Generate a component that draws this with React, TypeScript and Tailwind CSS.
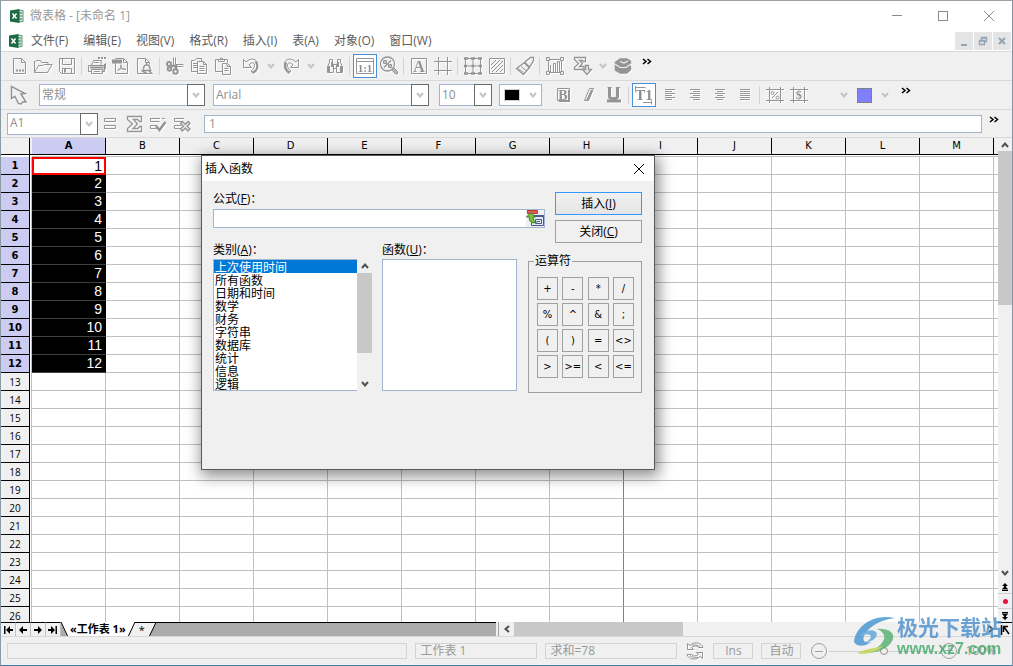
import React, { FC, ReactNode, useState } from "react";

const columns = ["A", "B", "C", "D", "E", "F", "G", "H", "I", "J", "K", "L", "M"];
const rows = Array.from({ length: 26 }, (_, i) => i + 1);
const menus = ["文件(F)", "编辑(E)", "视图(V)", "格式(R)", "插入(I)", "表(A)", "对象(O)", "窗口(W)"];
const categories = ["上次使用时间", "所有函数", "日期和时间", "数学", "财务", "字符串", "数据库", "统计", "信息", "逻辑"];
const operators = ["+", "-", "*", "/", "%", "^", "&", ";", "(", ")", "=", "<>", ">", ">=", "<", "<="];

const Glyph: FC<{ children: ReactNode }> = ({ children }) => (
  <svg
    className="h-5 w-5 shrink-0 drop-shadow-[1px_1px_0_#ffffff]"
    viewBox="0 0 20 20"
    fill="none"
    stroke="#949494"
    aria-hidden="true"
  >
    {children}
  </svg>
);

const icons: Record<string, ReactNode> = {
  new: (
    <>
      <path d="M4.5 2.5h8l4 4v11h-12zM12.5 2.5v4h4" />
      <path d="M7 14.5h2M10 14.5h2M13 14.5h2" strokeWidth="2" />
    </>
  ),
  open: <path d="M1.5 16.5V5.5h1l1-1h4l1 2h6.5v3M1.5 16.5l4-7h4l2-1h7.5l-4.5 8z" />,
  save: (
    <>
      <path d="M2.5 2.5h15v15h-13l-2-2zM5.5 2.5v6h9v-6M5.5 17.5v-5h9v5" />
      <path d="M8 13v3.5" strokeWidth="2" />
    </>
  ),
  print: (
    <>
      <path d="M1.5 9.5h16v6h-3M4.5 15.5h-3v-6M4.5 9.5l2-5h8l-1 5M7 6.5h5M4.5 13.5h11v4h-11zM7 15.5h6" />
      <path d="M3 11.5h13M11 2h2M14 2h2M17 2h2" strokeWidth="2" />
      <path d="M16.5 9.5l2-2v5l-2 2" fill="#949494" />
    </>
  ),
  pdf: (
    <>
      <path d="M4.5 7v10.5h12v-11l-4-4h-8M12.5 2.5v4h4" />
      <path d="M1 5.500h10" strokeWidth="4" />
      <path d="M6.5 14.5c3-1 4-4 3.5-6M10 9c0 3 2 4.5 5 4.5M7 14c2-1.5 5-1.5 8-.5" />
    </>
  ),
  preview: (
    <>
      <path d="M16 17.5H2.5v-15h8l4 4v2M10.5 2.5v4h4" />
      <path d="M6.5 14.5h10M8.5 13.5c0-6 6.5-6 6.5 0M11.7 9V7M7 14.5c1 2 3 2 4.5 2M14 15l3.5 3" strokeWidth="1.5" />
    </>
  ),
  cut: (
    <>
      <path d="M8.5 1.5v8M10.5 1.5v8M10 8.5h8.5M10 10.5h8.5" />
      <circle cx="4" cy="8" r="2" strokeWidth="2" />
      <circle cx="10.5" cy="15.5" r="2.2" strokeWidth="2" />
      <circle cx="4.5" cy="13" r="1.800" strokeWidth="2" />
      <path d="M6 10h5v3" strokeWidth="2.5" />
    </>
  ),
  copy: (
    <>
      <path d="M8 15.5H2.5v-11h3l2-2h5v3M8.5 5.5h6l3 3v9h-9zM14.5 5.5v3h3" />
      <path d="M4 7.5h4M4 9.5h4M4 11.5h4M10.5 10.5h5M10.5 12.5h5M10.5 14.5h5" />
    </>
  ),
  paste: (
    <>
      <path d="M9 15.5H2.5v-12h12v3M9.5 7.5h5l3 3v8h-8zM14 7.5v3h3.5M11.5 12.5h4M11.5 14.5h4" />
      <path d="M5.5 5.5h6v-2h-1.5l-1-1.5h-1l-1 1.5h-1.5z" />
    </>
  ),
  undo: (
    <>
      <path d="M2.5 3.500v8h8l-2.500-2.500c3-3.500 5-2.500 5.500 0 .3 2-1 4-3 5.500v1.500c4-1 6.500-4 6-8-.5-5-6-7-11.500-2z" />
      <path d="M14.5 5.5c4 5 1 10-3 11.500" strokeWidth="2" />
    </>
  ),
  redo: (
    <>
      <path d="M17.5 3.500v8h-8l2.500-2.500c-3-3.500-5-2.500-5.500 0-.3 2 1 4 3 5.500v1.500c-4-1-6.500-4-6-8 .5-5 6-7 11.500-2z" />
      <path d="M5 6.5c-2.500 5 1 9 3.500 10.500" strokeWidth="2.500" />
    </>
  ),
  find: (
    <>
      <path d="M2.5 16.5v-6l2-4v-3h3v3l1 4v6zM11.5 16.5v-6l1-4v-3h3v3l2 4v6zM8.5 8.5h3v4h-3z" />
      <path d="M4 10v6M7 6v5M13 6v5M16 10v6" strokeWidth="2" />
    </>
  ),
  actual: (
    <>
      <path d="M1.5 2.5h17v15h-17zM1.5 5.5h17" />
      <text x="10" y="15.5" textAnchor="middle" className="font-['Liberation_Serif',serif] text-[11px] font-bold" fill="#8c8c8c" stroke="none">1:1</text>
    </>
  ),
  zoom: (
    <>
      <circle cx="8.5" cy="8" r="7" strokeWidth="1.300" />
      <path d="M5 11.500l7-7" strokeWidth="1.500" />
      <path d="M13 12.5l1.500-1 4 4v2.500h-2l-3.500-4z" fill="#b4b4b4" />
      <circle cx="6" cy="6" r="1.500" strokeWidth="1.400" />
      <circle cx="11" cy="10" r="1.500" strokeWidth="1.400" />
    </>
  ),
  textBox: (
    <>
      <path d="M2.5 2.5h15v15h-15z" />
      <text x="10" y="16" textAnchor="middle" className="font-['Liberation_Serif',serif] text-[16px] font-bold" fill="#949494" stroke="none">A</text>
    </>
  ),
  frame: <path d="M1 5.5h18M1 14.5h18M5.5 1v18M14.5 1v18" />,
  border: (
    <>
      <path d="M3 2.500h14M3 10h14M3 17.500h14M2.500 3v14M10 3v14M17.500 3v14" />
      <path d="M1 2.500h4M8 2.500h4M15 2.500h4M1 17.500h4M8 17.500h4M15 17.500h4M1 10h3M8.500 10h3M16 10h3" strokeWidth="2.500" />
    </>
  ),
  hatch: <path d="M2.5 2.5h15v15h-15zM4 9l5-5M4 13l9-9M5 16l11-11M9 16l7-7M13 16l3-3" />,
  brush: (
    <>
      <path d="M18.500 1.500h-3l-6 5-8 6 7 6 6-7 4-7z" strokeWidth="1.300" />
      <path d="M9.500 6.500l5 5" strokeWidth="2" />
      <path d="M3 12.500l5.500 4M6 10.500l5 4" />
    </>
  ),
  chart: (
    <>
      <path d="M3.5 3.5h13v13h-13zM5.500 9v7M8.5 12.500v4h-3v-4M8.5 7.5h2v9h-2zM12.500 5.500h2v11h-2z" />
      <path d="M1.5 1.5h3v3h-3zM15.5 1.5h3v3h-3zM1.5 15.5h3v3h-3zM15.5 15.5h3v3h-3z" fill="#efefef" />
    </>
  ),
  sumDown: (
    <>
      <path d="M1.5 1.5h11v4h-2l-1-1H6.5l3 3-3 3h4.5v3h-9.5v-2l4-4-4-4z" strokeWidth="1.300" />
      <path d="M12.5 9.5h3v4h3l-4.500 5-4.500-5h3z" fill="#e8e8e8" strokeWidth="1.300" />
    </>
  ),
  package: (
    <>
      <path d="M2 6l5-3.500h7L18 5v2.500l-1 1.500 1 1v4l-4 3.500H7L2 14.500z" fill="#949494" strokeWidth=".5" />
      <path d="M2 8l5 3.500h6l5-3.500M7 5.500l4 1.500 4-2" stroke="#efefef" strokeWidth="1.200" />
    </>
  ),
  pointer: <path d="M2.5 1.5v12l3.500-2 3.500 7 3 .5 1-2h3.500l-5-8 4-.5z" strokeWidth="1.500" />,
  bold: (
    <>
      <path d="M3.5 3.5h12v12h-12z" />
      <path d="M15 5v12M5 16h11" strokeWidth="2" />
      <text x="9" y="15" textAnchor="middle" className="font-['Liberation_Serif',serif] text-[14px] font-bold" fill="#949494" stroke="none">B</text>
    </>
  ),
  italic: (
    <>
      <path d="M10.5 3.5h4l-5 12h-4z" />
      <path d="M13 5l-5 11" strokeWidth="2" />
    </>
  ),
  underline: (
    <>
      <path d="M5.500 2.5v9c0 3 8 3 8 0v-9" strokeWidth="3" />
      <path d="M3.500 2.500h4M12 2.500h4" />
      <path d="M3 16h14" strokeWidth="3" />
    </>
  ),
  textFlow: (
    <>
      <path d="M1.5 2.5h10M9 17.5h9M1.5 1v4M17.5 15.5v4" />
      <text x="10" y="15" textAnchor="middle" className="font-['Liberation_Serif',serif] text-[15px] font-bold" fill="#8c8c8c" stroke="none">T1</text>
    </>
  ),
  left: <path d="M5 4.5h10M5 6.5h7M5 8.5h10M5 10.5h7M5 12.5h10M5 14.5h7" />,
  right: <path d="M5 4.5h10M8 6.5h7M5 8.5h10M8 10.5h7M5 12.5h10M8 14.5h7" />,
  center: <path d="M5 4.5h10M7 6.5h6M5 8.5h10M7 10.5h6M5 12.5h10M7 14.5h6" />,
  justify: <path d="M5 4.5h10M5 6.5h10M5 8.5h10M5 10.5h10M5 12.5h10M5 14.5h10" />,
  percent: (
    <>
      <path d="M1 4.5h18M1 15.5h18M4.5 2v16M15.5 2v16M7 13l6-6" />
      <circle cx="7.500" cy="8" r="1.500" />
      <circle cx="12.500" cy="12.500" r="1.500" />
    </>
  ),
  money: (
    <>
      <path d="M1 4.5h18M1 15.5h18M4.5 2v16M15.5 2v16" />
      <text x="10" y="14" textAnchor="middle" className="font-['Liberation_Serif',serif] text-[12px] font-bold" fill="#949494" stroke="none">$</text>
    </>
  ),
  equals: <path d="M4.5 4.5h11v3h-11zM4.5 11.5h11v3h-11z" />,
  sum: <path d="M3.5 2.5h14v5h-2l-2-2H9.5l4 4.5-4.500 4.500h5l1.500-2h2v5h-14v-3l5-4.500-5-4.500z" strokeWidth="1.300" />,
  accept: (
    <>
      <path d="M12 4.500H2.5v3h9M9 11.5H2.500v3h6M14 4.500h3" />
      <path d="M8 12l3.500 4 6-8" strokeWidth="2.500" />
    </>
  ),
  cancel: (
    <>
      <path d="M12 4.500H2.5v3h8M9 11.5H2.500v3h6" />
      <path d="M9 8l8.500 8.500M17.500 8l-8.500 8.500" strokeWidth="4" />
      <path d="M10 9l6.500 6.500M16.500 9l-6.500 6.500" stroke="#e8e8e8" strokeWidth="1.300" />
    </>
  ),
  refresh: (
    <>
      <path d="M2.5 2.5v6h6l-2-2c3-2 5-2 7 0h4.500c-1-4-8-7-13-2zM17.5 17.5v-6h-6l2 2c-3 2-5 2-7 0H2c1 4 8 7 13 2z" />
      <path d="M7 4.500c3-1 6-.5 8 1.500M5 14.500c3 2.500 6 2.500 8 1.500" />
    </>
  ),
};

const ToolButton: FC<{ icon: string; label: string; active?: boolean }> = ({ icon, label, active }) => (
  <button
    type="button"
    aria-label={label}
    className={`flex h-6 w-6 shrink-0 items-center justify-center ${active ? "border border-[#4a90d9] bg-white" : ""}`}
  >
    <Glyph>{icons[icon]}</Glyph>
  </button>
);

const Separator: FC<{ tight?: boolean }> = ({ tight }) => (
  <span className={`h-[18px] shrink-0 border-l border-[#d4d4d4] ${tight ? "ml-px w-[3px]" : "ml-0.5 w-1"}`} />
);

const Chevron: FC<{ className?: string; up?: boolean }> = ({ className = "text-[#c4c4c4]", up }) => (
  <svg className={`h-2 w-2 shrink-0 ${className}`} viewBox="0 0 8 8" fill="none" stroke="currentColor" strokeWidth="2" aria-hidden="true">
    <path d={up ? "M1 6l3-3.500L7 6" : "M1 2l3 3.500L7 2"} />
  </svg>
);

const DropButton: FC<{ label: string }> = ({ label }) => (
  <button type="button" aria-label={label} className="flex h-6 w-4 shrink-0 items-center justify-center">
    <Chevron />
  </button>
);

const MoreButton: FC<{ className?: string }> = ({ className = "" }) => (
  <button type="button" aria-label="更多" className={`flex h-6 w-4 shrink-0 items-start justify-center pt-1 ${className}`}>
    <svg className="h-2 w-2.5" viewBox="0 0 10 8" fill="none" stroke="#000000" strokeWidth="1.500" aria-hidden="true">
      <path d="M1 1l3 2.500L1 6M5.500 1l3 2.500-3 2.500" />
    </svg>
  </button>
);

const Combo: FC<{ label: string; value: string; className: string }> = ({ label, value, className }) => (
  <div className={`relative h-[22px] shrink-0 border border-[#a3b4d0] bg-white ${className}`}>
    <select aria-label={label} className="block h-full w-full appearance-none bg-transparent pb-px pl-0.5 text-xs leading-[18px] text-[#8f8f8f] outline-none">
      <option>{value}</option>
    </select>
    <span className="pointer-events-none absolute -top-px -right-px flex h-[22px] w-[18px] items-center justify-center border border-[#6b6b6b] bg-white">
      <Chevron />
    </span>
  </div>
);

const AppLogo = () => (
  <svg className="h-4 w-4 shrink-0" viewBox="0 0 16 16" aria-hidden="true">
    <path d="M9 2l5 .5v11l-5 .5z" fill="#d8e8de" stroke="#5d9675" />
    <path d="M10 5h3M10 8h3M10 11h3" stroke="#2d7a50" />
    <path d="M1 2.500L10.500 1v14L1 13.500z" fill="#1e6b43" />
    <path d="M3.500 5.500l4 5M7.500 5.500l-4 5" stroke="#ffffff" strokeWidth="1.500" />
  </svg>
);

const TitleBar = () => (
  <header className="flex h-[29px] shrink-0 items-center bg-white pl-2">
    <AppLogo />
    <h1 className="ml-[5px] flex-1 text-xs whitespace-pre text-[#999999]">微表格 - [未命名 1]</h1>
    <button type="button" aria-label="最小化" className="flex h-full w-[46px] items-center justify-center">
      <span className="w-2.5 border-t border-[#8a8a8a]" />
    </button>
    <button type="button" aria-label="最大化" className="flex h-full w-[46px] items-center justify-center">
      <span className="h-2.5 w-2.5 border border-[#8a8a8a]" />
    </button>
    <button type="button" aria-label="关闭" className="flex h-full w-[46px] items-center justify-center">
      <svg className="h-3 w-3" viewBox="0 0 12 12" stroke="#8a8a8a" aria-hidden="true">
        <path d="M1 1l10 10M11 1L1 11" />
      </svg>
    </button>
  </header>
);

const MenuBar = () => (
  <nav className="flex h-[21px] shrink-0 items-center bg-white pr-px pl-[7px]">
    <AppLogo />
    <div className="ml-[7px] flex flex-1 gap-[15px] text-xs text-[#5c5c5c]">
      {menus.map((menu) => (
        <button key={menu} type="button">
          {menu}
        </button>
      ))}
    </div>
    <div className="flex gap-px pt-px text-[#94a3b3]">
      <button type="button" aria-label="最小化文档" className="flex h-[18px] w-[18px] items-end justify-center bg-[#e5e5e5] pb-1">
        <span className="w-1.5 border-t-2 border-current" />
      </button>
      <button type="button" aria-label="还原文档" className="flex h-[18px] w-[18px] items-center justify-center bg-[#e5e5e5]">
        <svg className="h-2.5 w-2.5" viewBox="0 0 10 10" fill="none" stroke="currentColor" aria-hidden="true">
          <path d="M3.500 4V1.500h5v4H7M1.500 4.500h5v4h-5zM3 2h6M1 5h6" strokeWidth="1.300" />
        </svg>
      </button>
      <button type="button" aria-label="关闭文档" className="flex h-[18px] w-[18px] items-center justify-center bg-[#e5e5e5]">
        <svg className="h-2 w-2" viewBox="0 0 8 8" stroke="currentColor" strokeWidth="2" aria-hidden="true">
          <path d="M1 1l6 6M7 1L1 7" />
        </svg>
      </button>
    </div>
  </nav>
);

const StandardToolbar = () => (
  <div className="flex h-[29px] shrink-0 items-center border-t border-[#d9d9d9] pl-1.5">
    <ToolButton icon="new" label="新建" />
    <ToolButton icon="open" label="打开" />
    <ToolButton icon="save" label="保存" />
    <Separator />
    <ToolButton icon="print" label="打印" />
    <ToolButton icon="pdf" label="导出 PDF" />
    <ToolButton icon="preview" label="预览" />
    <Separator />
    <ToolButton icon="cut" label="剪切" />
    <ToolButton icon="copy" label="复制" />
    <ToolButton icon="paste" label="粘贴" />
    <div className="ml-1 flex">
      <ToolButton icon="undo" label="撤消" />
      <DropButton label="撤消列表" />
      <ToolButton icon="redo" label="重做" />
      <DropButton label="重做列表" />
    </div>
    <div className="ml-1 flex">
      <ToolButton icon="find" label="查找" />
    </div>
    <Separator />
    <ToolButton icon="actual" label="实际大小" active />
    <ToolButton icon="zoom" label="缩放" />
    <Separator />
    <ToolButton icon="textBox" label="文本框" />
    <ToolButton icon="frame" label="框架" />
    <Separator />
    <ToolButton icon="border" label="边框" />
    <ToolButton icon="hatch" label="底纹" />
    <Separator tight />
    <ToolButton icon="brush" label="格式刷" />
    <Separator />
    <ToolButton icon="chart" label="图表" />
    <div className="ml-1 flex">
      <ToolButton icon="sumDown" label="求和" />
      <DropButton label="求和列表" />
      <ToolButton icon="package" label="数据" />
    </div>
    <MoreButton className="ml-1" />
  </div>
);

const FormatToolbar = () => (
  <div className="flex h-[29px] shrink-0 items-center border-t border-[#d9d9d9] pl-1.5">
    <ToolButton icon="pointer" label="选择" />
    <div className="ml-2 flex gap-2">
      <Combo label="样式" value="常规" className="w-[166px]" />
      <Combo label="字体" value="Arial" className="w-[216px]" />
    </div>
    <div className="ml-2.5 flex gap-[7px]">
      <Combo label="字号" value="10" className="w-[53px]" />
      <button type="button" aria-label="字体颜色" className="flex h-[22px] w-[43px] items-center justify-between border border-[#a3b4d0] bg-white px-1">
        <span className="h-3 w-4 border border-[#d0d0d0] bg-black" />
        <Chevron />
      </button>
    </div>
    <div className="ml-2.5 flex gap-px">
      <ToolButton icon="bold" label="粗体" />
      <ToolButton icon="italic" label="斜体" />
      <ToolButton icon="underline" label="下划线" />
    </div>
    <Separator />
    <ToolButton icon="textFlow" label="文字方向" active />
    <div className="ml-0.5 flex gap-px">
      <ToolButton icon="left" label="左对齐" />
      <ToolButton icon="right" label="右对齐" />
      <ToolButton icon="center" label="居中" />
      <ToolButton icon="justify" label="两端对齐" />
    </div>
    <Separator />
    <ToolButton icon="percent" label="百分比" />
    <ToolButton icon="money" label="货币" />
    <div className="ml-[25px] flex items-center">
      <DropButton label="边框颜色" />
      <button type="button" aria-label="填充颜色" className="mx-[5px] h-[15px] w-[15px] border border-[#808080] bg-[#8080ff]" />
      <DropButton label="填充颜色列表" />
    </div>
    <MoreButton className="ml-[5px]" />
  </div>
);

const FormulaBar = () => (
  <div className="flex h-[29px] shrink-0 items-center border-t border-b border-[#d9d9d9] pr-2.5 pl-1.5">
    <Combo label="单元格" value="A1" className="w-[91px]" />
    <ToolButton icon="equals" label="等于" />
    <ToolButton icon="sum" label="求和" />
    <ToolButton icon="accept" label="确认" />
    <ToolButton icon="cancel" label="取消" />
    <input
      aria-label="编辑栏"
      defaultValue="1"
      className="ml-2.5 h-[18px] min-w-0 flex-1 border border-[#a3b4d0] bg-white px-1 text-xs text-[#8f8f8f] outline-none"
    />
    <MoreButton className="ml-1" />
  </div>
);

const Sheet = () => (
  <div className="min-h-0 min-w-0 flex-1 overflow-hidden bg-white">
    <table className="w-full table-fixed border-separate border-spacing-0">
      <colgroup>
        <col className="w-[29px]" />
        <col className="w-0.5" />
        {columns.map((column) => (
          <col key={column} className="w-[74px]" />
        ))}
        <col />
      </colgroup>
      <thead>
        <tr className="h-[17px] bg-[#f0f0f0] font-['DejaVu_Sans',sans-serif] text-[10px] leading-4">
          <th className="border-r border-b border-black p-0" />
          <th className="border-b border-black p-0" />
          {columns.map((column) => (
            <th
              key={column}
              scope="col"
              className={`border-r border-b border-black p-0 ${column === "A" ? "bg-[#ccccf2] font-bold" : "font-normal"}`}
            >
              {column}
            </th>
          ))}
          <th className="border-b border-black p-0" />
        </tr>
      </thead>
      <tbody>
        <tr className="h-0.5">
          <td className="border-r border-black p-0" />
          <td className="p-0" />
          <td colSpan={14} className="border-b border-[#c0c0c0] p-0" />
        </tr>
        {rows.map((row) => {
          const selected = row <= 12;
          return (
            <tr key={row} className="h-[18px]">
              <th
                scope="row"
                className={`border-r border-b border-black p-0 pt-px text-[10px] leading-4 ${
                  selected ? "bg-[#ccccf2] font-['DejaVu_Sans',sans-serif] font-bold" : "bg-[#f0f0f0] font-normal"
                }`}
              >
                {row}
              </th>
              <td className="border-r border-[#c0c0c0] p-0" />
              {columns.map((column) => {
                if (column === "A" && row === 1) {
                  return (
                    <td key={column} className="p-0 pr-1 pb-px text-right font-['Liberation_Sans',sans-serif] text-sm leading-4 ring-2 ring-[#ff0000] ring-inset">
                      {row}
                    </td>
                  );
                }
                if (column === "A" && selected) {
                  return (
                    <td key={column} className="border-b border-[#404040] bg-black p-0 pr-1 pb-px text-right font-['Liberation_Sans',sans-serif] text-sm leading-4 text-white">
                      {row}
                    </td>
                  );
                }
                return (
                  <td
                    key={column}
                    className={`border-r border-b border-b-[#c0c0c0] p-0 ${column === "H" ? "border-r-[#808080]" : "border-r-[#c0c0c0]"}`}
                  />
                );
              })}
              <td className="border-b border-[#c0c0c0] p-0" />
            </tr>
          );
        })}
      </tbody>
    </table>
  </div>
);

const VerticalScroll = () => (
  <aside className="flex w-3.5 shrink-0 flex-col bg-[#f0f0f0]">
    <button type="button" aria-label="向上滚动" className="flex h-[13px] items-center justify-center">
      <Chevron up className="text-[#505050]" />
    </button>
    <div className="min-h-0 flex-1">
      <div className="h-[37%] bg-[#c8c8c8]" />
    </div>
    <button type="button" aria-label="向下滚动" className="flex h-3.5 items-center justify-center">
      <Chevron className="text-[#505050]" />
    </button>
    <button type="button" aria-label="上一页" className="flex h-3.5 items-center justify-center border-b border-[#d0d0d0]">
      <svg className="h-2 w-2" viewBox="0 0 8 8" aria-hidden="true">
        <path d="M4 0l3 3H5v1l2 2H1l2-2V3H1zM1 6.500h6V8H1z" />
      </svg>
    </button>
    <button type="button" aria-label="选择对象" className="flex h-3.5 items-center justify-center">
      <span className="h-[5px] w-[5px] rounded-full bg-[#e8103c]" />
    </button>
    <button type="button" aria-label="下一页" className="flex h-3.5 items-center justify-center border-t border-[#d0d0d0]">
      <svg className="h-2 w-2" viewBox="0 0 8 8" aria-hidden="true">
        <path d="M4 8l3-3H5V4l2-2H1l2 2v1H1zM1 0h6v1.500H1z" />
      </svg>
    </button>
  </aside>
);

const navArrows = [
  { label: "第一张工作表", d: "M1 1h1.500v8H1zM3 5l4-4v3h3v2H7v3z" },
  { label: "上一张工作表", d: "M1 5l4-4v3h4v2H5v3z" },
  { label: "下一张工作表", d: "M9 5L5 1v3H1v2h4v3z" },
  { label: "最后一张工作表", d: "M9 1H7.500v8H9zM7 5L3 1v3H0v2h3v3z" },
];

const SheetTabs = () => (
  <div className="flex h-3.5 shrink-0 bg-[#f0f0f0]">
    <div className="flex w-[49%] shrink-0 bg-[#ababab]">
      {navArrows.map((arrow) => (
        <button
          key={arrow.label}
          type="button"
          aria-label={arrow.label}
          className="flex w-[15px] shrink-0 items-center justify-center border-t border-r border-t-black border-r-[#c0c0c0] bg-[#f0f0f0]"
        >
          <svg className="h-2.5 w-2.5" viewBox="0 0 10 10" aria-hidden="true">
            <path d={arrow.d} />
          </svg>
        </button>
      ))}
      <svg className="h-3.5 w-[7px] shrink-0" viewBox="0 0 7 14" aria-hidden="true">
        <path d="M0 0h7v14h-1z" fill="#ffffff" />
        <path d="M0 0l6.500 14" stroke="#000000" />
      </svg>
      <button type="button" className="shrink-0 bg-white px-0.5 text-[11px] leading-3 font-bold whitespace-pre">
        «工作表 1»
      </button>
      <svg className="h-3.5 w-[7px] shrink-0" viewBox="0 0 7 14" aria-hidden="true">
        <path d="M7 0h-7v14h1z" fill="#ffffff" />
        <path d="M7 0v14h-6z" fill="#f0f0f0" />
        <path d="M7 0L.5 14" stroke="#000000" />
      </svg>
      <button type="button" className="w-3.5 shrink-0 border-t border-black bg-[#f0f0f0] text-[11px] leading-3">
        *
      </button>
      <svg className="h-3.5 w-[7px] shrink-0" viewBox="0 0 7 14" aria-hidden="true">
        <path d="M7 0H0v14h1z" fill="#f0f0f0" />
        <path d="M0 .5h7L.5 14" stroke="#000000" fill="none" />
      </svg>
      <span className="flex-1 border-t border-black" />
    </div>
    <span className="mr-px w-[3px] border-r border-[#a0a0a0]" />
    <div className="flex min-w-0 flex-1">
      <button type="button" aria-label="向左滚动" className="flex w-3.5 shrink-0 items-center justify-center">
        <Chevron className="rotate-90 text-[#505050]" />
      </button>
      <div className="flex-1">
        <div className="h-full w-[36%] bg-[#c8c8c8]" />
      </div>
      <button type="button" aria-label="向右滚动" className="flex w-3.5 shrink-0 items-center justify-center">
        <Chevron className="-rotate-90 text-[#505050]" />
      </button>
      <button type="button" aria-label="转到左上角" className="flex w-3.5 shrink-0 items-center justify-center border-t border-black">
        <svg className="h-2.5 w-2.5" viewBox="0 0 10 10" fill="none" stroke="#000000" aria-hidden="true">
          <path d="M1.500 0v10M3 1.500h5M3.500 2v5M4 2l5 7" strokeWidth="1.500" />
        </svg>
      </button>
    </div>
  </div>
);

const StatusBar = () => (
  <footer className="flex h-[29px] shrink-0 items-center gap-2 border-t border-[#d9d9d9] pr-4 pl-1.5 text-xs text-[#999999]">
    <span className="h-4 flex-1 border border-[#d4d4d4]" />
    <span className="h-4 w-[122px] border border-[#d4d4d4] px-1 leading-[14px]">工作表 1</span>
    <span className="h-4 w-[132px] border border-[#d4d4d4] px-1 leading-[14px]">求和=78</span>
    <button type="button" aria-label="重新计算" className="flex w-5 justify-center">
      <Glyph>{icons.refresh}</Glyph>
    </button>
    <span className="h-4 w-10 border border-[#d4d4d4] text-center leading-[14px]">Ins</span>
    <span className="h-4 w-10 border border-[#d4d4d4] text-center leading-[14px]">自动</span>
    <div className="ml-0.5 flex items-center gap-0.5">
      <button type="button" aria-label="缩小" className="flex h-4 w-4 items-center justify-center rounded-full border border-[#a0a0a0]">
        <span className="w-2 border-t border-[#a0a0a0]" />
      </button>
      <input
        type="range"
        aria-label="缩放比例"
        className="h-4 w-[110px] appearance-none bg-transparent [&::-webkit-slider-runnable-track]:h-px [&::-webkit-slider-runnable-track]:bg-[#d0d0d0] [&::-webkit-slider-thumb]:-mt-1 [&::-webkit-slider-thumb]:h-2 [&::-webkit-slider-thumb]:w-2 [&::-webkit-slider-thumb]:appearance-none [&::-webkit-slider-thumb]:rounded-full [&::-webkit-slider-thumb]:border [&::-webkit-slider-thumb]:border-[#909090] [&::-webkit-slider-thumb]:bg-[#f0f0f0]"
      />
      <button type="button" aria-label="放大" className="flex h-4 w-4 items-center justify-center rounded-full border border-[#a0a0a0]">
        <svg className="h-2 w-2" viewBox="0 0 8 8" stroke="#a0a0a0" aria-hidden="true">
          <path d="M0 3.500h8M4 0v8" />
        </svg>
      </button>
    </div>
    <span>100%</span>
  </footer>
);

const InsertFunctionDialog = () => {
  const [formula, setFormula] = useState("");
  const [category, setCategory] = useState(categories[0]);

  return (
    <section
      role="dialog"
      aria-label="插入函数"
      className="absolute top-[154px] left-[200px] h-[315px] w-[454px] border border-[#5a5a5a] bg-[#f0f0f0] text-xs text-black shadow-[2px_4px_14px_2px_rgba(0,0,0,0.45)]"
    >
      <div className="flex h-[25px] items-center justify-between bg-white pr-2.5 pl-[3px]">
        <h2>插入函数</h2>
        <button type="button" aria-label="关闭对话框">
          <svg className="h-2.5 w-2.5" viewBox="0 0 10 10" stroke="#000000" aria-hidden="true">
            <path d="M0 0l10 10M10 0L0 10" />
          </svg>
        </button>
      </div>
      <div className="pt-[11px] pr-3 pl-[11px]">
        <div className="flex gap-2.5">
          <div className="flex-1">
            <label htmlFor="formula" className="block h-[17px] leading-[13px]">
              公式(<u>F</u>)：
            </label>
            <div className="flex h-[19px] border border-[#a3b4d0] bg-white">
              <input
                id="formula"
                value={formula}
                onChange={(e) => setFormula(e.target.value)}
                className="min-w-0 flex-1 px-1 outline-none"
              />
              <button type="button" aria-label="折叠对话框" className="bg-[#f0f0f0]">
                <svg className="h-[17px] w-[18px]" viewBox="0 0 18 17" fill="none" aria-hidden="true">
                  <path d="M1.500 .5h10v3h-10z" fill="#e85a5a" stroke="#b83a3a" />
                  <path d="M5.500 5.500h12v10h-12z" fill="#e4eaf6" stroke="#4a5a8c" />
                  <path d="M5.500 6h12" stroke="#4a5a8c" strokeWidth="2" />
                  <path d="M9.500 9.500h6v4h-6zM11 11.500h3" stroke="#4a5a8c" />
                  <path d="M.5 7L5 2.500 9.500 7H7c0 3 1 4.500 3.500 5-4 2-8 0-7-5z" fill="#7cc142" stroke="#3c7a1c" />
                </svg>
              </button>
            </div>
          </div>
          <div className="flex w-[87px] flex-col gap-[5px]">
            <button
              type="button"
              className="h-[23px] border border-[#3399ff] bg-gradient-to-b from-[#f0f0f0] to-[#e5e5e5]"
              onClick={() => setFormula(`${formula}()`)}
            >
              插入(<u>I</u>)
            </button>
            <button type="button" className="h-[23px] border border-[#a0a0a0]">
              关闭(<u>C</u>)
            </button>
          </div>
        </div>

        <div className="flex gap-2.5">
          <div className="w-[159px]">
            <label htmlFor="category" className="block h-4 leading-[14px]">
              类别(<u>A</u>)：
            </label>
            <div className="flex h-[132px]">
              <select
                id="category"
                size={10}
                value={category}
                onChange={(e) => setCategory(e.target.value)}
                className="h-full min-w-0 flex-1 appearance-none overflow-hidden border border-r-0 border-[#a3b4d0] bg-white leading-[10px] outline-none"
              >
                {categories.map((item) => (
                  <option
                    key={item}
                    className="flex h-[13px] min-h-0 items-center px-px py-0 leading-[10px] checked:bg-[#0078d7] checked:bg-[linear-gradient(#0078d7,#0078d7)] checked:text-white"
                  >
                    {item}
                  </option>
                ))}
              </select>
              <div className="flex w-[15px] flex-col bg-[#f0f0f0]">
                <button type="button" aria-label="列表向上" className="flex h-3.5 items-center justify-center">
                  <Chevron up className="text-[#505050]" />
                </button>
                <div className="h-20 bg-[#c8c8c8]" />
                <button type="button" aria-label="列表向下" className="mt-auto flex h-3.5 items-center justify-center">
                  <Chevron className="text-[#505050]" />
                </button>
              </div>
            </div>
          </div>
          <div className="w-[135px]">
            <label htmlFor="function" className="block h-4 leading-[14px]">
              函数(<u>U</u>)：
            </label>
            <select id="function" size={10} className="block h-[132px] w-full appearance-none border border-[#a3b4d0] bg-white outline-none" />
          </div>
          <fieldset className="mt-2.5 ml-px flex-1 border border-[#a0a0a0] pr-[7px] pb-3.5 pl-2">
            <legend className="ml-[-3px] px-px leading-4">运算符</legend>
            <div className="grid grid-cols-[21px_21px_21px_21px] justify-between gap-y-[3px] pt-2 font-['DejaVu_Sans',sans-serif] text-[10px]">
              {operators.map((operator) => (
                <button
                  key={operator}
                  type="button"
                  className="h-[23px] border border-[#a0a0a0]"
                  onClick={() => setFormula(formula + operator)}
                >
                  {operator}
                </button>
              ))}
            </div>
          </fieldset>
        </div>
      </div>
    </section>
  );
};

const Watermark = () => (
  <div className="pointer-events-none absolute right-2.5 bottom-1.5 flex items-start opacity-80">
    <svg className="h-11 w-11" viewBox="0 0 44 44" aria-hidden="true">
      <path d="M42 3C20-2 2 12 1 27c4 6 12 4 17 0-6 1-9-1-7-6C15 12 26 5 42 3z" fill="#3f93d0" />
      <path d="M7 23c2-7 12-10 16-6 3 4-3 10-10 10 4-2 6-5 4-7-3-2-7 0-10 3z" fill="#5aa5d8" />
      <path d="M24 14c10-1 18 3 16 10-3 10-20 16-36 14 14 0 25-7 27-14 1-5-2-8-7-10z" fill="#54b070" />
      <path d="M4 38c8-4 18-5 26-7-6 6-17 9-26 7z" fill="#c3d44c" />
    </svg>
    <div className="flex flex-col">
      <span className="text-[21px] leading-6 font-bold text-[#4a8ecb]">极光下载站</span>
      <span className="font-['Liberation_Sans',sans-serif] text-base leading-5 font-bold text-[#3fa968]">www.xz7.com</span>
    </div>
  </div>
);

const App = () => (
  <div className="relative flex h-screen w-full flex-col overflow-hidden border border-t-[#a0a0a4] border-r-[#8a93a0] border-b-[#3a80b0] border-l-[#8a9ba4] bg-[#f0f0f0] font-['Open_Sans','Noto_Sans_CJK_SC',sans-serif]">
    <TitleBar />
    <MenuBar />
    <StandardToolbar />
    <FormatToolbar />
    <FormulaBar />
    <main className="flex min-h-0 flex-1">
      <Sheet />
      <VerticalScroll />
    </main>
    <SheetTabs />
    <StatusBar />
    <InsertFunctionDialog />
    <Watermark />
  </div>
);

export default App;
